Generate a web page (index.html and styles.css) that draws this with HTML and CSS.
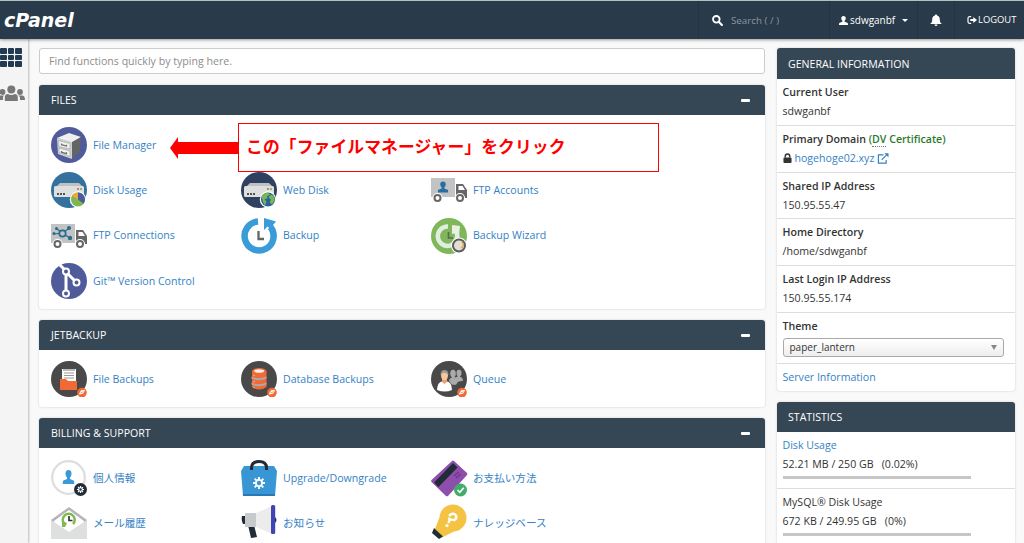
FILE: index.html
```html
<!DOCTYPE html>
<html lang="ja">
<head>
<meta charset="utf-8">
<title>cPanel</title>
<link rel="stylesheet" href="styles.css">
</head>
<body>
<svg class="defs" aria-hidden="true">
  <symbol id="server" viewBox="0 0 36 36"><path d="M9 11h19l5 5H4z" fill="#bfc1c2"/><path d="M3 15.500q0-1.500 1.500-1.500h27q1.500 0 1.500 1.500v8q0 1.500-1.500 1.500h-27Q3 25 3 23.500z" fill="#dedfdf"/><path d="M6 21h2v2H6zm3 0h2v2H9zm3 0h2v2h-2z" fill="#555"/><circle cx="27" cy="17" r=".9" fill="#d9492f"/><circle cx="30" cy="17" r=".9" fill="#69a84a"/></symbol>
  <symbol id="truck" viewBox="0 0 36 36"><path d="M0 6h24v19H0z" fill="#c2c3c4"/><path d="M25 12h7l4 6v8h-3a4 4 0 0 0-8 0z" fill="#666"/><path d="M27.500 14h4l2.500 4h-6.500z" fill="#fff"/><g fill="#fff" stroke="#fff" stroke-width="5"><circle cx="6.500" cy="26" r="2.600"/><circle cx="29" cy="26" r="2.600"/></g><g fill="#fff" stroke="#666" stroke-width="2"><circle cx="6.500" cy="26" r="3"/><circle cx="29" cy="26" r="3"/></g></symbol>
  <symbol id="jet" viewBox="0 0 36 36"><circle cx="31" cy="31.500" r="4.800" fill="#f16a35"/><path d="M27.800 33l2.400-3.700 4-.2-2 3.400-3.400.9z" fill="#fff"/><path d="M29.500 32l3-1.300" stroke="#f16a35" stroke-width=".7"/></symbol>
  <symbol id="gear" viewBox="0 0 12 12"><path d="M5 0h2v2.200l1.200.5L9.700 1.100l1.300 1.300-1.500 1.500.4 1.100H12v2H9.900l-.5 1.200L11 9.700 9.600 11 8.100 9.500 7 9.900V12H5V9.900l-1.200-.5L2.300 11 1 9.700l1.500-1.600L2.100 7H0V5h2.100l.5-1.200L1 2.300 2.300 1l1.600 1.500L5 2.100zM6 3.800a2.200 2.200 0 1 0 0 4.400 2.200 2.200 0 0 0 0-4.400z" fill="currentColor" fill-rule="evenodd"/></symbol>
  <symbol id="person" viewBox="0 0 12 12"><path d="M6 0c2 0 3 1.300 3 3 0 1.500-.6 2.600-1.500 3.300v1.400L11 9c.8.400 1 1.200 1 3H0c0-1.800.2-2.600 1-3l3.500-1.300V6.300C3.600 5.600 3 4.500 3 3c0-1.700 1-3 3-3z" fill="currentColor"/></symbol>
</svg>

<header class="topbar">
  <div class="logo">cPanel</div>
  <div class="top-search">
    <svg class="search-icon" viewBox="0 0 12 12"><circle cx="4.700" cy="4.700" r="3.600" fill="none" stroke="#fff" stroke-width="2"/><path d="M7.600 7.600l3.200 3.200" stroke="#fff" stroke-width="2.300" stroke-linecap="round"/></svg>
    <span>Search ( / )</span>
  </div>
  <div class="top-user"><svg class="user-icon"><use href="#person"/></svg><span>sdwganbf</span><i class="caret"></i></div>
  <div class="top-bell"><svg viewBox="0 0 12 12"><path d="M6 0c.7 0 1 .4 1 1 2 .5 2.800 2 2.800 4 0 2.300.6 3.400 2.200 4.600H0C1.600 8.400 2.200 7.300 2.200 5c0-2 .8-3.500 2.800-4 0-.6.300-1 1-1zM4.500 10h3a1.500 1.500 0 0 1-3 0z" fill="#fff"/></svg></div>
  <div class="top-logout"><svg viewBox="0 0 12 12"><path d="M5 2H3a1.800 1.800 0 0 0-1.800 1.800v4.400A1.800 1.800 0 0 0 3 10h2" fill="none" stroke="#fff" stroke-width="1.400"/><path d="M4 4.700h3.500V2.300L12 6 7.500 9.700V7.300H4z" fill="#fff"/></svg><span>LOGOUT</span></div>
</header>

<div class="page">
  <nav class="rail">
    <div class="apps"><i></i><i></i><i></i><i></i><i></i><i></i><i></i><i></i><i></i></div>
    <svg class="people" viewBox="0 0 27 17"><g fill="#777"><circle cx="2.500" cy="7" r="2.900"/><circle cx="20" cy="7" r="2.900"/><path d="M0 10.500h4L3 12v3H0zM18 10.500h4q3 0 3 4.500h-5v-3z"/><circle cx="11.300" cy="4.500" r="4"/><path d="M4.800 16v-3.500Q4.800 9 7.800 9q3.500 1.800 7 0 3 0 3 3.500V16z"/></g></svg>
  </nav>

  <main class="main">
    <div class="find">Find functions quickly by typing here.</div>

    <section class="panel files">
      <h2><span>FILES</span><i class="minus"></i></h2>
      <div class="grid">
        <a class="item first"><svg viewBox="0 0 36 36"><circle cx="18" cy="18" r="18" fill="#4f5b9b"/><path d="M6 11l12-5 12 4-8 6z" fill="#efeff0"/><path d="M6 11l15 4v17L7 27z" fill="#d0d1d2"/><path d="M21 15l9-5-1 15-8 7z" fill="#626466"/><path d="M7.500 13.500l11.500 3v5.500L8 19.500zM8 21l11 3v5.500l-11-4z" fill="#f2f2f2" stroke="#a5a6a8" stroke-width=".7"/><path d="M10.500 16.500v1.200l5 1.300v-1.300m-5 6.300v1.200l5 1.400v-1.400" fill="none" stroke="#6c6e70" stroke-width="1.200"/></svg><span>File Manager</span></a>
        <a class="item"><svg viewBox="0 0 36 36"><circle cx="18" cy="18" r="18" fill="#34719f"/><use href="#server"/><circle cx="27" cy="27.500" r="8.200" fill="#fff"/><circle cx="27" cy="27.500" r="7" fill="#7fb94e"/><path d="M27 27.500v-7a7 7 0 0 1 5.500 11.300z" fill="#4f5b9b"/><path d="M27 27.500l-6-3.800a7 7 0 0 1 6-3.200z" fill="#eba83c"/></svg><span>Disk Usage</span></a>
        <a class="item"><svg viewBox="0 0 36 36"><circle cx="18" cy="18" r="18" fill="#304061"/><use href="#server"/><circle cx="27" cy="27.500" r="8.200" fill="#fff"/><circle cx="27" cy="27.500" r="7" fill="#28629b"/><path d="M20.500 24.500l3-3.200 4-.5 1.500 2-3 1.500.5 2-3 1 2 2.500-1.500 3.700-2-3.500zM30 22.500l2.500 1.200 1.200 4-2.500 4.800-2.500-2 1-3-2.200-2.500z" fill="#78b653"/></svg><span>Web Disk</span></a>
        <a class="item"><svg viewBox="0 0 36 36"><use href="#truck"/><svg x="6.500" y="9" width="11" height="12" color="#286ea0"><use href="#person"/></svg></svg><span>FTP Accounts</span></a>
        <a class="item"><svg viewBox="0 0 36 36"><use href="#truck"/><path d="M3 16l8-1 8-5M5 10l6 5 8 5" stroke="#286b8c" fill="none" stroke-width="1.200"/><circle cx="11.500" cy="15.500" r="3.200" fill="#c2c3c4" stroke="#286b8c" stroke-width="1.700"/><g fill="#286b8c"><circle cx="3" cy="15.500" r="1.500"/><circle cx="5.500" cy="10.500" r="1.500"/><circle cx="18" cy="10" r="2"/><circle cx="19" cy="20" r="2.200"/></g></svg><span>FTP Connections</span></a>
        <a class="item"><svg viewBox="0 0 36 36"><path d="M17 3.500A14.500 14.500 0 1 0 29.500 9" fill="none" stroke="#3a9bd9" stroke-width="6.500"/><path d="M23 0v12l3.500-3.500L33 14l-1-7 3-3.500z" fill="#3a9bd9"/><path d="M17.500 13v8H23" fill="none" stroke="#626466" stroke-width="2.300"/></svg><span>Backup</span></a>
        <a class="item"><svg viewBox="0 0 36 36"><circle cx="18" cy="18" r="18" fill="#80b75a"/><path d="M17 8.500a9.700 9.700 0 1 0 8.500 6" fill="none" stroke="#e0eee0" stroke-width="4.500"/><path d="M21 7l8 1-1 9-3-2-4 1z" fill="#e7f2e3"/><path d="M17.500 14v6H22" fill="none" stroke="#596b55" stroke-width="1.700"/><circle cx="28" cy="27.500" r="8" fill="#fff"/><circle cx="28" cy="27.500" r="6" fill="#e3dfd4" stroke="#5c5c5c" stroke-width="2"/><path d="M31 24q3 4-1 6" stroke="#d8aa55" fill="none" stroke-width="1.400"/></svg><span>Backup Wizard</span></a>
        <a class="item git"><svg viewBox="0 0 36 36"><circle cx="18" cy="18" r="18" fill="#4f5b9b"/><path d="M9 2l6 6v22m0-21l10 10" fill="none" stroke="#fff" stroke-width="3"/><g fill="#4f5b9b" stroke="#fff" stroke-width="2"><circle cx="15" cy="8.500" r="3"/><circle cx="25.500" cy="19.500" r="3"/><circle cx="15" cy="30.500" r="3"/></g></svg><span>Git™ Version Control</span></a>
      </div>
      <div class="callout">
        <svg viewBox="0 0 69 22"><path d="M0 11L8 0v5h61v12H8v5z" fill="#f00"/></svg>
        <p>この「ファイルマネージャー」をクリック</p>
      </div>
    </section>

    <section class="panel jetbackup">
      <h2><span>JETBACKUP</span><i class="minus"></i></h2>
      <div class="grid">
        <a class="item"><svg viewBox="0 0 36 36"><circle cx="18" cy="18" r="18" fill="#4a4949"/><path d="M11 8h14v15H11z" fill="#fff"/><path d="M12 8h12v2H12z" fill="#bbb"/><path d="M13 12h10m-10 2.500h10m-10 2.500h10" stroke="#999"/><path d="M9 18h6l2 2h9v9H9z" fill="#f16a35"/><use href="#jet"/></svg><span>File Backups</span></a>
        <a class="item"><svg viewBox="0 0 36 36"><circle cx="18" cy="18" r="18" fill="#4a4949"/><path d="M11 10v16q7 5 14.500 0V10z" fill="#f16a35"/><path d="M10.500 15.500q7.500 3.500 15 0v2q-7.500 3.500-15 0zm0 6q7.500 3.500 15 0v2q-7.500 3.500-15 0z" fill="#aaa"/><ellipse cx="18.200" cy="10" rx="7.200" ry="3" fill="#f16a35"/><ellipse cx="18.200" cy="10" rx="5" ry="1.800" fill="#eee"/><path d="M13 14.300v.8m0 5.200v.8m0 5.200v.8" stroke="#fff"/><use href="#jet"/></svg><span>Database Backups</span></a>
        <a class="item"><svg viewBox="0 0 36 36"><circle cx="18" cy="18" r="18" fill="#4a4949"/><g fill="#aaa"><ellipse cx="22" cy="12.500" rx="2.800" ry="3.800"/><ellipse cx="28" cy="12" rx="2.500" ry="3.300"/><path d="M18 20q0-2.500 3-3.500v-2h2.500v2l3-.8v-2h2.500v2q3 .8 3 4l-5 1-2 3h-4z"/></g><path d="M6 29q0-8 6-9h3q6 1 6 9-7 3-15 0z" fill="#fff"/><path d="M11 18h5v3l-2.500 2-2.500-2z" fill="#e9a06b"/><ellipse cx="13.500" cy="14.500" rx="3.500" ry="4.800" fill="#f7c69b"/><path d="M9.500 14q0-5 4-5t4 5q-2-2.500-5-2.500z" fill="#999"/><use href="#jet"/></svg><span>Queue</span></a>
      </div>
    </section>

    <section class="panel billing">
      <h2><span>BILLING &amp; SUPPORT</span><i class="minus"></i></h2>
      <div class="grid">
        <a class="item"><svg viewBox="0 0 36 36"><circle cx="17.500" cy="17.500" r="16.300" fill="#fff" stroke="#dcddde" stroke-width="2.200"/><svg x="11.500" y="10" width="12" height="14" viewBox="0 0 12 12" preserveAspectRatio="none" color="#389bd8"><use href="#person" width="12" height="12"/></svg><circle cx="29.500" cy="29.500" r="6.500" fill="#212c37"/><svg x="26" y="26" width="7" height="7" color="#fff"><use href="#gear"/></svg></svg><span>個人情報</span></a>
        <a class="item"><svg viewBox="0 0 36 36"><path d="M3 6h30l3 5-2 25H2L0 11z" fill="#3896d5"/><path d="M2 34h32v2H2z" fill="#2879b5"/><path d="M10.500 10V8q0-6.500 7.500-6.500T25.500 8v2" fill="none" stroke="#212c37" stroke-width="3"/><svg x="12" y="17" width="12" height="12" color="#fff"><use href="#gear"/></svg></svg><span>Upgrade/Downgrade</span></a>
        <a class="item"><svg viewBox="0 0 36 36"><path d="M21 1q1-1 2 0l13 12q.8 1 0 2L17 36q-1 .7-2 0L.5 22q-1-1 0-2z" fill="#8e4eac"/><path d="M22 3l4.500 4.500L7.500 27 3 22.500z" fill="#212c37"/><path d="M23 16l5-4m-3 6l5-4" stroke="#6d3889" stroke-width="1.500"/><circle cx="29.500" cy="30" r="6.500" fill="#42ad68"/><path d="M26.500 30l2.300 2.300 4-4.500" fill="none" stroke="#fff" stroke-width="1.700"/></svg><span>お支払い方法</span></a>
        <a class="item"><svg viewBox="0 0 36 36"><path d="M0 15L18 2l18 13v19H0z" fill="#b4b5b7"/><path d="M3 16L18 5l15 11v8L18 29 3 24z" fill="#fff"/><path d="M0 15l18 12 18-12v19H0z" fill="#dedfdf"/><path d="M13.500 19A6 6 0 1 1 22 19" fill="none" stroke="#80b94f" stroke-width="2.500"/><path d="M11 16l5 2-2 4h-3z" fill="#80b94f"/><path d="M18 11v4.500h3.500" fill="none" stroke="#333" stroke-width="1.700"/></svg><span>メール履歴</span></a>
        <a class="item"><svg viewBox="0 0 36 36"><path d="M1 11h5v8H2q-2-4-1-8zM7 20h6l3 12-6 1z" fill="#212c37"/><path d="M4 8h12v14H4z" fill="#c9cacb"/><path d="M15 8L31 1v28l-16-7z" fill="#ececed"/><rect x="30" y="0" width="4.200" height="29" rx="1.500" fill="#3f45b2"/><path d="M34 12q3 3 0 6z" fill="#25306e"/></svg><span>お知らせ</span></a>
        <a class="item"><svg viewBox="0 0 36 36"><path d="M4 24L8.500 12.500A13.500 13.500 0 1 1 23 26.500L12 32z" fill="#f4c344"/><path d="M3 23l9 8.500-4 2.500-7-6z" fill="#212c37"/><path d="M18 11q4-4 6.500-1 2 3-1 5-3 0-5-1 0 2-1 4" fill="none" stroke="#fff" stroke-width="2.500"/><circle cx="16" cy="20.500" r="1.600" fill="#fff"/></svg><span>ナレッジベース</span></a>
      </div>
    </section>
  </main>

  <aside class="side">
    <section class="panel">
      <h2><span>GENERAL INFORMATION</span></h2>
      <div class="row"><b>Current User</b><span>sdwganbf</span></div>
      <div class="row"><b>Primary Domain <em>(<u>DV</u> Certificate)</em></b><span class="domain"><svg class="lock" viewBox="0 0 10 11"><path d="M2.500 5V3.500a2.500 2.500 0 0 1 5 0V5" fill="none" stroke="#333" stroke-width="1.600"/><rect x=".5" y="5" width="9" height="6" rx="1" fill="#333"/></svg><a>hogehoge02.xyz</a><svg class="ext" viewBox="0 0 12 12"><path d="M6.500 2H1v9h8.500V7.500M4.500 7.500L10 2" fill="none" stroke="#3482c5" stroke-width="1.300"/><path d="M7.500.3H12v4.400z" fill="#3482c5"/></svg></span></div>
      <div class="row"><b>Shared IP Address</b><span>150.95.55.47</span></div>
      <div class="row"><b>Home Directory</b><span>/home/sdwganbf</span></div>
      <div class="row"><b>Last Login IP Address</b><span>150.95.55.174</span></div>
      <div class="row theme"><b>Theme</b><div class="select"><span>paper_lantern</span><i class="caret"></i></div></div>
      <div class="row server"><a>Server Information</a></div>
    </section>
    <section class="panel stats">
      <h2><span>STATISTICS</span></h2>
      <div class="row stat"><a>Disk Usage</a><span>52.21 MB / 250 GB &nbsp; (0.02%)</span><div class="bar"></div></div>
      <div class="row stat"><span>MySQL® Disk Usage</span><span>672 KB / 249.95 GB &nbsp; (0%)</span><div class="bar"></div></div>
    </section>
  </aside>
</div>
</body>
</html>
```
FILE: styles.css
```css
* { box-sizing: border-box; }
body {
  margin: 0;
  height: 543px;
  overflow: hidden;
  background: #f9f9f9;
  color: #333;
  font: 10.6px/19px "Open Sans", "Noto Sans CJK JP", sans-serif;
}
svg { display: block; flex: none; }
.defs { position: absolute; width: 0; height: 0; }
a { color: #3482c5; text-decoration: none; }

.topbar {
  position: relative;
  display: flex;
  height: 39px;
  background: #293a4a;
  border-top: 1px solid #b4bfc2;
  box-shadow: 0 1px 3px rgba(0,0,0,.4);
  color: #fff;
}
.topbar > div { display: flex; align-items: center; border-left: 1px solid #253443; }
.topbar > .logo {
  flex: 1;
  padding: 0 0 0 4px;
  border: 0;
  font: italic 700 19px/30px "DejaVu Sans", sans-serif;
}
.top-search { width: 131px; padding-left: 13px; gap: 8px; color: #8c969e; font-size: 9.800px; }
.search-icon { width: 11px; height: 11px; }
.top-user { width: 88px; padding-left: 9px; font-size: 10px; }
.user-icon { width: 9px; height: 9px; margin-right: 2px; }
.caret { border: 3px solid transparent; border-top-color: currentColor; border-bottom: 0; }
.top-user .caret { margin-left: 7px; }
.top-bell { width: 37px; justify-content: center; }
.top-bell svg { width: 12px; height: 13px; }
.top-logout { width: 70px; padding: 0 0 1px 12px; gap: 1px; font-size: 9.400px; }
.top-logout svg { width: 10px; height: 10px; }

.page { display: flex; height: 504px; }
.rail {
  width: 28px;
  flex: none;
  padding-top: 9px;
  background: #f4f4f4;
  box-shadow: 1px 0 2px rgba(0,0,0,.25);
}
.apps { display: grid; grid-template-columns: repeat(3, 6.5px); grid-auto-rows: 5.500px; gap: 1px; width: 22px; }
.apps i { background: #223b52; border-radius: 1px; }
.people { width: 27px; height: 17px; margin-top: 18px; }

.main { width: 726px; margin: 9px 0 0 11px; flex: none; }
.find {
  height: 26px;
  padding: 0 9px;
  border: 1px solid #ccc;
  border-radius: 3px;
  background: #fff;
  color: #8d8d8d;
  line-height: 25px;
  font-size: 10.600px;
}
.panel { background: #fff; border-radius: 3px; box-shadow: 0 0 2px rgba(0,0,0,.22); }
.panel h2 {
  display: flex;
  justify-content: space-between;
  align-items: center;
  height: 30px;
  margin: 0;
  padding: 1px 15px 0 12px;
  border-radius: 3px 3px 0 0;
  background: #354654;
  color: #fff;
  font-size: 10.600px;
  font-weight: 400;
}
.minus { width: 9px; height: 3px; border-radius: 1px; background: #fff; }
.files { position: relative; height: 224px; margin-top: 11px; }
.jetbackup { height: 87px; margin-top: 11px; }
.billing { height: 125px; margin-top: 11px; border-radius: 3px 3px 0 0; }
.grid {
  display: grid;
  grid-template-columns: repeat(3, 190px);
  grid-auto-rows: 36px;
  gap: 9.400px 0;
  padding: 12px 0 0 12px;
}
.jetbackup .grid { padding-top: 11px; }
.item { display: flex; align-items: center; gap: 6px; }
.item > svg { width: 36px; height: 36px; overflow: visible; }
.item.first { grid-column: 1 / -1; }

/* Annotation laid over the Files panel */
.callout { position: absolute; left: 131px; top: 38px; display: flex; align-items: center; }
.callout svg { width: 69px; height: 22px; }
.callout p {
  width: 421px;
  height: 49px;
  margin: 0 0 0 -1px;
  padding-left: 7px;
  border: 1px solid #f00;
  background: #fff;
  color: #f00;
  font: 700 16.800px/45px "Noto Sans CJK JP", sans-serif;
  letter-spacing: .1px;
}

.side { width: 238px; margin: 9px 0 0 12px; flex: none; }
.side .panel h2 { height: 31px; padding-left: 11px; }
.row {
  display: flex;
  flex-direction: column;
  height: 46.800px;
  padding: 4px 5.500px 0;
  border-bottom: 1px solid #ddd;
}
.row b { font-weight: 600; }
.row em { color: #2c7a2c; font-style: normal; }
.row u { text-decoration: none; border-bottom: 1px dotted #777; }
.domain { display: flex; align-items: center; gap: 3px; }
.lock { width: 9px; height: 10px; }
.ext { width: 12px; height: 11px; }
.theme { height: 51px; }
.select {
  display: flex;
  justify-content: space-between;
  align-items: center;
  width: 221px;
  height: 19px;
  margin-top: 2px;
  flex: none;
  padding: 0 6px;
  border: 1px solid #aaa;
  border-radius: 3px;
  background: linear-gradient(#fff, #eee);
  font-size: 10px;
}
.select .caret { border-width: 5px 3.500px 0; color: #888; }
.server { height: 27px; border: 0; }
.side .stats { height: 141px; margin-top: 11px; border-radius: 3px 3px 0 0; }
.side .stats h2 { height: 30px; }
.stat { height: 57.500px; }
.stat:last-child { height: 53px; border-bottom: 0; }
.bar { width: 188px; height: 3px; margin-top: 2px; background: #c6c6c6; }
```
